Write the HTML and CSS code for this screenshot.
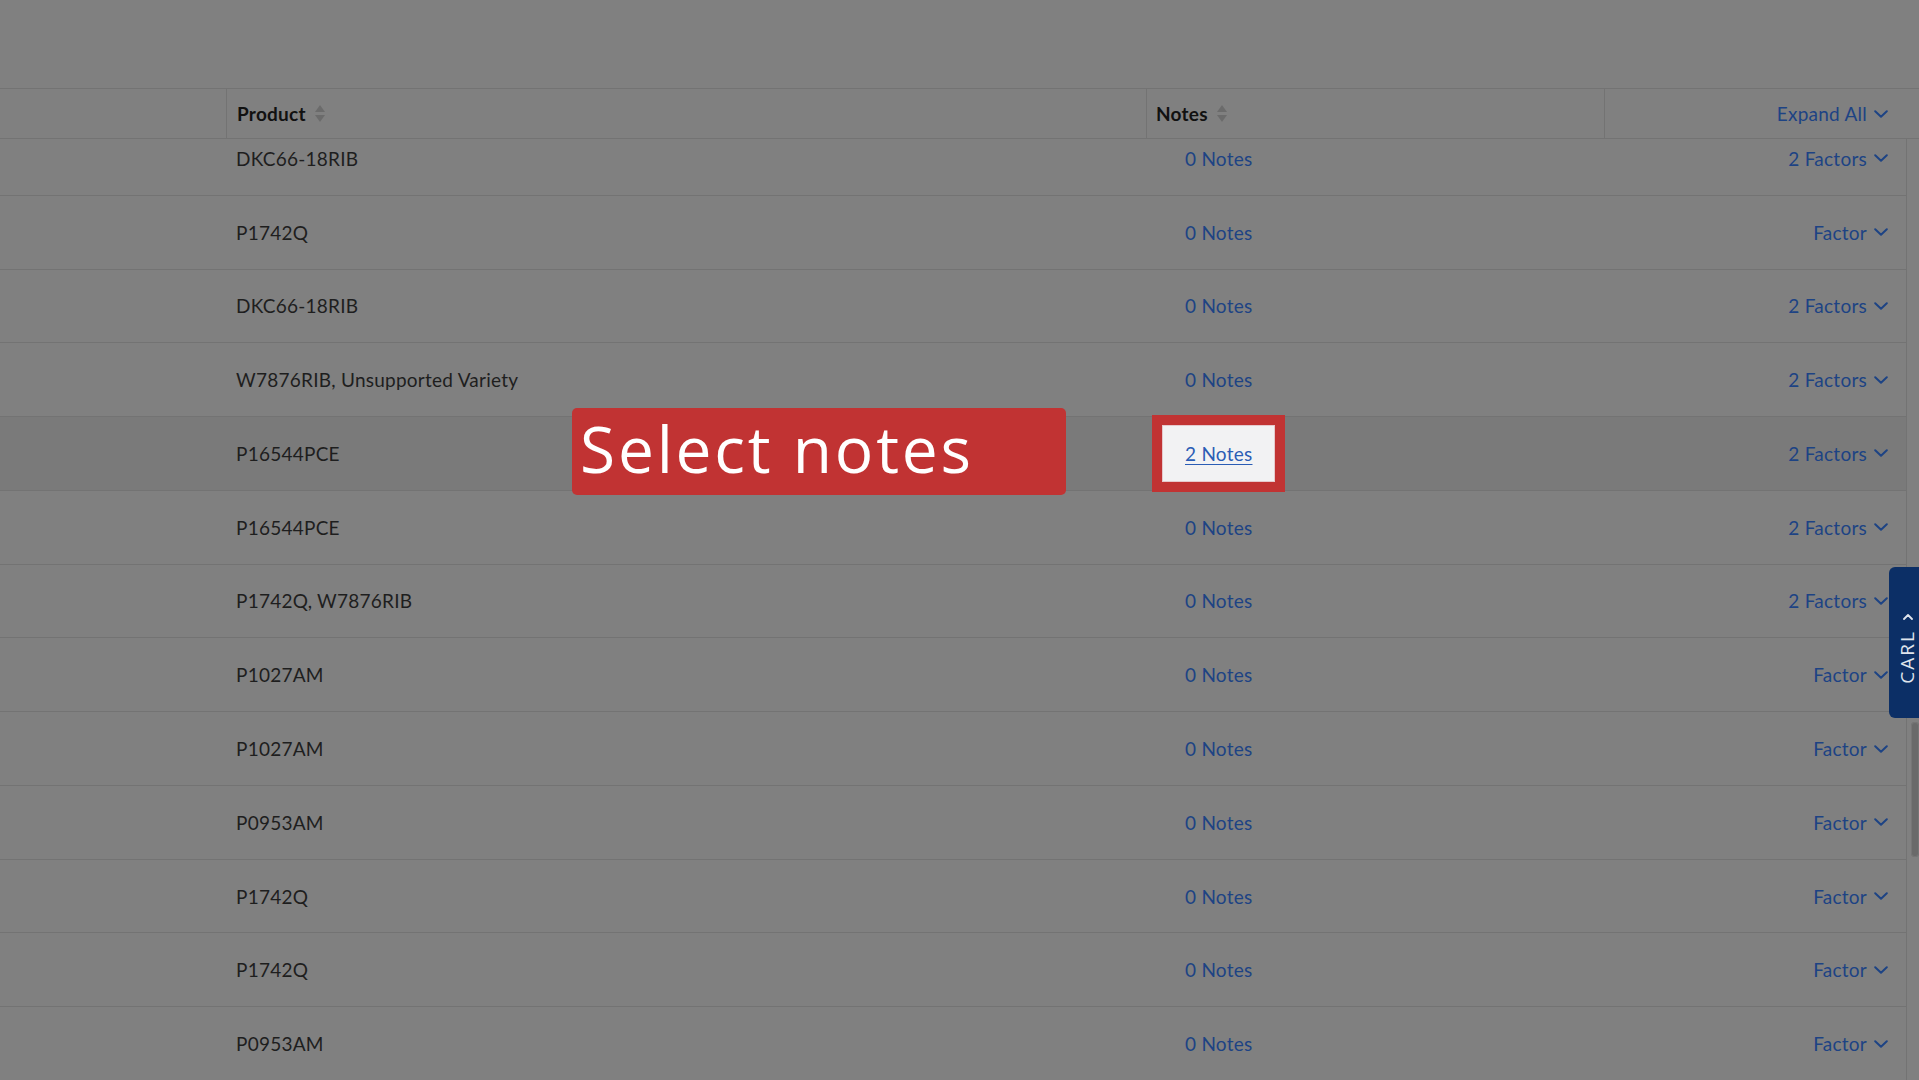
FILE: index.html
```html
<!DOCTYPE html>
<html lang="en">
<head>
<meta charset="utf-8">
<title>Products</title>
<link rel="stylesheet" href="styles.css">
</head>
<body>
<div class="page">
  <div class="topspace"></div>
  <div class="thead">
    <div class="th th-blank"></div>
    <div class="th">Product <svg class="sort" viewBox="0 0 10 17" width="10" height="17"><path d="M0 7 L5 0 L10 7 Z"/><path d="M0 10 L5 17 L10 10 Z"/></svg></div>
    <div class="th">Notes <svg class="sort" viewBox="0 0 10 17" width="10" height="17"><path d="M0 7 L5 0 L10 7 Z"/><path d="M0 10 L5 17 L10 10 Z"/></svg></div>
    <div class="th th-expand"><span class="link">Expand All <svg class="chev" viewBox="0 0 14 8" width="14" height="8"><path d="M1.2 1.2 L7 6.8 L12.8 1.2"/></svg></span></div>
  </div>
  <div class="tbody">
    <div class="rows">
      <div class="row"><div class="cell"></div><div class="cell product">DKC66-18RIB</div><div class="cell notes"><span class="note-btn">0 Notes</span></div><div class="cell factors"><span class="link">2 Factors <svg class="chev" viewBox="0 0 14 8" width="14" height="8"><path d="M1.2 1.2 L7 6.8 L12.8 1.2"/></svg></span></div></div>
      <div class="row"><div class="cell"></div><div class="cell product">P1742Q</div><div class="cell notes"><span class="note-btn">0 Notes</span></div><div class="cell factors"><span class="link">Factor <svg class="chev" viewBox="0 0 14 8" width="14" height="8"><path d="M1.2 1.2 L7 6.8 L12.8 1.2"/></svg></span></div></div>
      <div class="row"><div class="cell"></div><div class="cell product">DKC66-18RIB</div><div class="cell notes"><span class="note-btn">0 Notes</span></div><div class="cell factors"><span class="link">2 Factors <svg class="chev" viewBox="0 0 14 8" width="14" height="8"><path d="M1.2 1.2 L7 6.8 L12.8 1.2"/></svg></span></div></div>
      <div class="row"><div class="cell"></div><div class="cell product">W7876RIB, Unsupported Variety</div><div class="cell notes"><span class="note-btn">0 Notes</span></div><div class="cell factors"><span class="link">2 Factors <svg class="chev" viewBox="0 0 14 8" width="14" height="8"><path d="M1.2 1.2 L7 6.8 L12.8 1.2"/></svg></span></div></div>
      <div class="row row-active"><div class="cell"></div><div class="cell product">P16544PCE</div><div class="cell notes"><span class="note-btn note-btn-focus">2 Notes</span></div><div class="cell factors"><span class="link">2 Factors <svg class="chev" viewBox="0 0 14 8" width="14" height="8"><path d="M1.2 1.2 L7 6.8 L12.8 1.2"/></svg></span></div></div>
      <div class="row"><div class="cell"></div><div class="cell product">P16544PCE</div><div class="cell notes"><span class="note-btn">0 Notes</span></div><div class="cell factors"><span class="link">2 Factors <svg class="chev" viewBox="0 0 14 8" width="14" height="8"><path d="M1.2 1.2 L7 6.8 L12.8 1.2"/></svg></span></div></div>
      <div class="row"><div class="cell"></div><div class="cell product">P1742Q, W7876RIB</div><div class="cell notes"><span class="note-btn">0 Notes</span></div><div class="cell factors"><span class="link">2 Factors <svg class="chev" viewBox="0 0 14 8" width="14" height="8"><path d="M1.2 1.2 L7 6.8 L12.8 1.2"/></svg></span></div></div>
      <div class="row"><div class="cell"></div><div class="cell product">P1027AM</div><div class="cell notes"><span class="note-btn">0 Notes</span></div><div class="cell factors"><span class="link">Factor <svg class="chev" viewBox="0 0 14 8" width="14" height="8"><path d="M1.2 1.2 L7 6.8 L12.8 1.2"/></svg></span></div></div>
      <div class="row"><div class="cell"></div><div class="cell product">P1027AM</div><div class="cell notes"><span class="note-btn">0 Notes</span></div><div class="cell factors"><span class="link">Factor <svg class="chev" viewBox="0 0 14 8" width="14" height="8"><path d="M1.2 1.2 L7 6.8 L12.8 1.2"/></svg></span></div></div>
      <div class="row"><div class="cell"></div><div class="cell product">P0953AM</div><div class="cell notes"><span class="note-btn">0 Notes</span></div><div class="cell factors"><span class="link">Factor <svg class="chev" viewBox="0 0 14 8" width="14" height="8"><path d="M1.2 1.2 L7 6.8 L12.8 1.2"/></svg></span></div></div>
      <div class="row"><div class="cell"></div><div class="cell product">P1742Q</div><div class="cell notes"><span class="note-btn">0 Notes</span></div><div class="cell factors"><span class="link">Factor <svg class="chev" viewBox="0 0 14 8" width="14" height="8"><path d="M1.2 1.2 L7 6.8 L12.8 1.2"/></svg></span></div></div>
      <div class="row"><div class="cell"></div><div class="cell product">P1742Q</div><div class="cell notes"><span class="note-btn">0 Notes</span></div><div class="cell factors"><span class="link">Factor <svg class="chev" viewBox="0 0 14 8" width="14" height="8"><path d="M1.2 1.2 L7 6.8 L12.8 1.2"/></svg></span></div></div>
      <div class="row"><div class="cell"></div><div class="cell product">P0953AM</div><div class="cell notes"><span class="note-btn">0 Notes</span></div><div class="cell factors"><span class="link">Factor <svg class="chev" viewBox="0 0 14 8" width="14" height="8"><path d="M1.2 1.2 L7 6.8 L12.8 1.2"/></svg></span></div></div>
    </div>
    <div class="scrollbar"><div class="thumb"></div></div>
  </div>
  <div class="callout">Select notes</div>
  <div class="carl-tab">
    <svg class="carl-chev" viewBox="0 0 10 6" width="10" height="6"><path d="M1 5 L5 1 L9 5"/></svg>
    <span class="carl-text">CARL</span>
  </div>
</div>
</body>
</html>
```

FILE: styles.css
```css
* { box-sizing: border-box; }

html, body {
  margin: 0;
  padding: 0;
  background: #808080;
}

body {
  font-family: Lato, "Open Sans", "Liberation Sans", sans-serif;
  font-size: 19px;
  letter-spacing: 0.25px;
  color: #1e1e1e;
}

.page {
  position: relative;
  width: 1919px;
  height: 1080px;
  overflow: hidden;
  background: #808080;
}

.topspace {
  height: 88px;
}

.thead {
  display: grid;
  grid-template-columns: 226px 920px 458px 1fr;
  height: 51px;
  border-top: 1px solid #737373;
  border-bottom: 1px solid #737373;
}

.th {
  display: flex;
  align-items: center;
  padding-left: 10px;
  font-weight: 700;
  color: #111;
  border-left: 1px solid #737373;
}

.th-blank {
  border-left: none;
}

.th:nth-child(3) {
  padding-left: 9px;
}

.th-expand {
  justify-content: flex-end;
  padding-right: 31px;
  font-weight: 400;
}

.sort {
  margin-left: 9px;
  fill: #6b6b6b;
}

.link {
  display: inline-flex;
  align-items: center;
  color: #1d4384;
  white-space: nowrap;
}

.chev {
  margin-left: 7px;
  fill: none;
  stroke: #1d4384;
  stroke-width: 2;
  stroke-linecap: round;
  stroke-linejoin: round;
}

.tbody {
  display: flex;
  height: 941px;
  overflow: hidden;
}

.rows {
  width: 1907px;
  border-right: 1px solid #737373;
  margin-top: -17px;
  flex: none;
}

.row {
  display: grid;
  grid-template-columns: 226px 920px 458px 1fr;
  height: 73.77px;
  border-bottom: 1px solid #737373;
}

.row-active {
  background: #7a7a7a;
}

.cell {
  display: flex;
  align-items: center;
}

.product {
  padding-left: 10px;
}

.notes {
  padding-left: 16px;
}

.note-btn {
  display: inline-flex;
  align-items: center;
  justify-content: center;
  height: 57px;
  padding: 0 23px;
  color: #1d4384;
}

.note-btn-focus {
  background: #f2f2f3;
  color: #2b5db5;
  text-decoration: underline;
  text-underline-offset: 3px;
  outline: 10px solid #c13333;
  box-shadow: inset 0 0 0 1px #e6c9cc;
}

.factors {
  justify-content: flex-end;
  padding-right: 18px;
}

.scrollbar {
  flex: 1;
  display: flex;
  flex-direction: column;
  align-items: flex-end;
  padding-top: 583px;
}

.thumb {
  width: 8px;
  height: 135px;
  border-radius: 4px;
  background: #6a6a6a;
  box-shadow: inset 0 0 0 1px #767676;
}

.callout {
  position: absolute;
  left: 572px;
  top: 408px;
  width: 494px;
  height: 87px;
  padding-left: 8px;
  border-radius: 5px;
  background: #c13333;
  color: #ffffff;
  font-family: "Open Sans", Lato, sans-serif;
  font-weight: 500;
  font-size: 64px;
  letter-spacing: 2.8px;
  line-height: 82px;
  white-space: nowrap;
}

.carl-tab {
  position: absolute;
  left: 1889px;
  top: 567px;
  width: 34px;
  height: 151px;
  padding-left: 3px;
  padding-top: 12px;
  border-radius: 6px 0 0 6px;
  background: #0c2f66;
  display: flex;
  flex-direction: column;
  align-items: center;
  justify-content: center;
  gap: 10px;
}

.carl-chev {
  fill: none;
  stroke: #dfe4ec;
  stroke-width: 1.8;
  stroke-linecap: round;
  stroke-linejoin: round;
}

.carl-text {
  writing-mode: vertical-rl;
  transform: rotate(180deg);
  color: #dfe4ec;
  font-family: "Open Sans", Lato, sans-serif;
  font-weight: 500;
  font-size: 19px;
  letter-spacing: 2px;
  line-height: 1;
}
```
